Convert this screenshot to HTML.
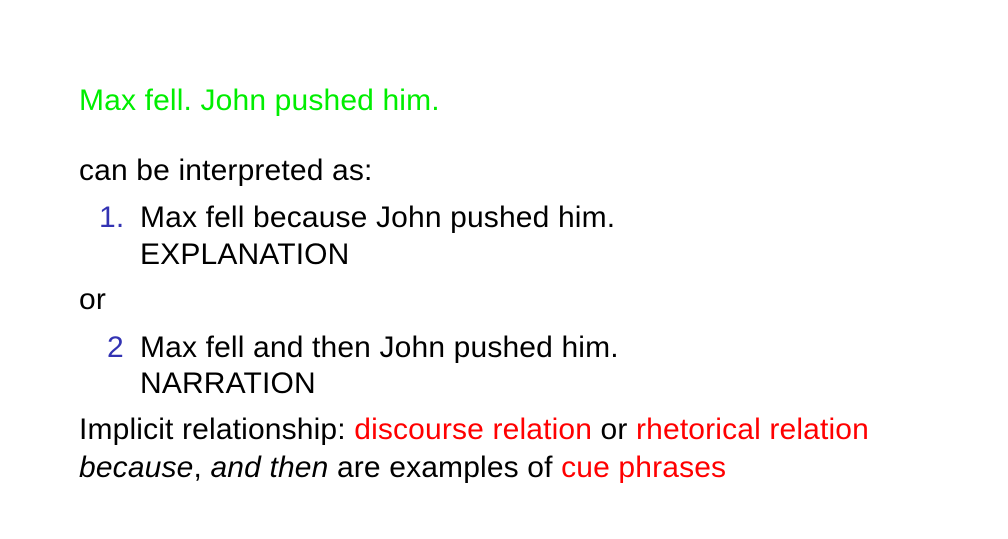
<!DOCTYPE html>
<html><head><style>
body{margin:0;width:1008px;height:539px;background:#fff;font-family:"Liberation Sans",sans-serif;font-size:30px;letter-spacing:0.15px;color:#000;position:relative;overflow:hidden}
div{position:absolute;white-space:nowrap;line-height:1}
.r{color:#f00}.b{color:#3333b3}
</style></head><body>
<div style="left:79px;top:86px;color:#00ee00">Max fell. John pushed him.</div>
<div style="left:79px;top:156px">can be interpreted as:</div>
<div class="b" style="left:99px;top:203px">1.</div>
<div style="left:140px;top:203px">Max fell because John pushed him.</div>
<div style="left:140px;top:240px">EXPLANATION</div>
<div style="left:79px;top:285px">or</div>
<div class="b" style="left:107px;top:333px">2</div>
<div style="left:140px;top:333px">Max fell and then John pushed him.</div>
<div style="left:140px;top:369px">NARRATION</div>
<div style="left:79px;top:415px">Implicit relationship: <span class="r">discourse relation</span> or <span class="r">rhetorical relation</span></div>
<div style="left:79px;top:453px"><i>because</i>, <i>and then</i> are examples of <span class="r">cue phrases</span></div>
</body></html>
